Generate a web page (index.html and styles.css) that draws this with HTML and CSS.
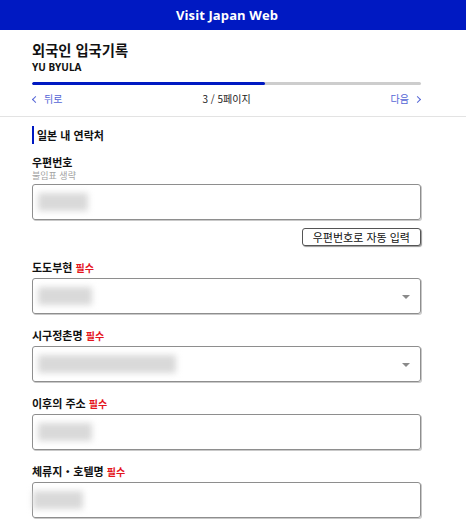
FILE: index.html
```html
<!DOCTYPE html>
<html lang="ko">
<head>
<meta charset="utf-8">
<link rel="stylesheet" href="styles.css">
</head>
<body>
<header class="topbar">Visit Japan Web</header>
<section class="summary">
  <div class="wrap">
    <h1 class="title">외국인 입국기록</h1>
    <div class="name">YU BYULA</div>
    <div class="progress"><div class="progress-fill" style="width:60%"></div></div>
    <nav class="pager">
      <a class="pager-link"><span class="chev chev-left"></span>뒤로</a>
      <span class="pager-count">3 / 5페이지</span>
      <a class="pager-link">다음<span class="chev chev-right"></span></a>
    </nav>
  </div>
</section>
<main class="wrap form">
  <h2 class="section-title">일본 내 연락처</h2>

  <div class="field">
    <div class="label label-tight">우편번호</div>
    <div class="hint">불임표 생략</div>
    <div class="input"><span class="blur w50"></span></div>
    <div class="actions"><button class="btn">우편번호로 자동 입력</button></div>
  </div>

  <div class="field">
    <div class="label">도도부현 <span class="req">필수</span></div>
    <div class="input select"><span class="blur w54"></span><span class="caret"></span></div>
  </div>

  <div class="field">
    <div class="label">시구정촌명 <span class="req">필수</span></div>
    <div class="input select"><span class="blur w140"></span><span class="caret"></span></div>
  </div>

  <div class="field">
    <div class="label">이후의 주소 <span class="req">필수</span></div>
    <div class="input"><span class="blur w54"></span></div>
  </div>

  <div class="field">
    <div class="label">체류지・호텔명 <span class="req">필수</span></div>
    <div class="input"><span class="blur w50 edge"></span></div>
  </div>
</main>
</body>
</html>
```
FILE: styles.css
```css
* { box-sizing: border-box; }
html, body { margin: 0; padding: 0; background: #fff; }
body {
  font-family: "Noto Sans", "Noto Sans CJK KR", sans-serif;
  color: #111;
  overflow: hidden;
}
.topbar {
  height: 30px;
  background: #0019c2;
  color: #fff;
  font-family: "Open Sans", "Noto Sans", sans-serif;
  font-weight: 700;
  font-size: 13px;
  line-height: 30px;
  text-align: center;
  padding-right: 12px;
  letter-spacing: 0.1px;
}
.wrap {
  width: 389px;
  margin-left: 32px;
}
.summary {
  padding-top: 10px;
  padding-bottom: 10px;
  border-bottom: 1px solid #e3e3e3;
}
.title {
  margin: 0;
  font-family: "Noto Sans CJK KR", sans-serif;
  font-size: 14.3px;
  font-weight: 700;
  line-height: 20px;
}
.name {
  font-family: "Noto Sans", sans-serif;
  font-size: 10px;
  font-weight: 700;
  line-height: 12px;
  margin-top: 1px;
}
.progress {
  margin-top: 9px;
  height: 3px;
  background: #cdcdcd;
  border-radius: 2px;
  overflow: hidden;
}
.progress-fill {
  height: 100%;
  background: #0019c2;
  border-radius: 2px;
}
.pager {
  margin-top: 7px;
  display: flex;
  justify-content: space-between;
  align-items: center;
  height: 14px;
  font-family: "Noto Sans CJK KR", sans-serif;
  font-size: 10px;
  line-height: 14px;
}
.pager-link {
  color: #5566d6;
  display: flex;
  align-items: center;
  gap: 4px;
}
.pager-count { color: #222; }
.chev {
  display: inline-block;
  width: 5px;
  height: 5px;
  border-top: 1px solid #5566d6;
  border-left: 1px solid #5566d6;
}
.chev-left { transform: rotate(-45deg); margin-left: 1px; margin-right: 2px; }
.chev-right { transform: rotate(135deg); margin-left: 2px; margin-right: 1px; }

.form { padding-top: 9px; }
.section-title {
  margin: 0 0 12px 0;
  border-left: 2px solid #0019c2;
  padding-left: 3px;
  font-family: "Noto Sans CJK KR", sans-serif;
  font-size: 11px;
  font-weight: 700;
  line-height: 18px;
}
.field { margin-bottom: 14px; }
.label {
  font-family: "Noto Sans CJK KR", sans-serif;
  font-size: 11px;
  font-weight: 700;
  line-height: 14px;
  height: 14px;
  margin-bottom: 4px;
  white-space: nowrap;
}
.label-tight { margin-top: -1px; margin-bottom: 1px; }
.hint {
  font-family: "Noto Sans CJK KR", sans-serif;
  font-size: 9px;
  color: #a3a3a3;
  line-height: 11px;
  height: 11px;
  margin-bottom: 3px;
}
.req {
  color: #e4141c;
  font-size: 10px;
  line-height: 1;
  vertical-align: baseline;
}
.input {
  position: relative;
  height: 36px;
  border: 1px solid #8e8e8e;
  border-radius: 3px;
  box-shadow: 1px 1px 0 #c9c9c9;
  display: flex;
  align-items: center;
  padding-left: 5px;
}
.blur {
  display: block;
  height: 18px;
  background: #d9d9d9;
  filter: blur(3px);
}
.w50 { width: 50px; }
.w54 { width: 54px; }
.w140 { width: 138px; }
.edge { margin-left: -5px; }
.caret {
  position: absolute;
  right: 10px;
  top: 16px;
  width: 0;
  height: 0;
  border-left: 4px solid transparent;
  border-right: 4px solid transparent;
  border-top: 4px solid #8a8a8a;
}
.actions {
  display: flex;
  justify-content: flex-end;
  margin-top: 8px;
}
.btn {
  height: 18px;
  padding: 0 10px;
  font-family: "Noto Sans CJK KR", sans-serif;
  font-size: 11px;
  line-height: 16px;
  color: #111;
  background: #fff;
  border: 1px solid #555;
  border-radius: 3px;
  box-shadow: 1px 1px 1px #999;
}
```
